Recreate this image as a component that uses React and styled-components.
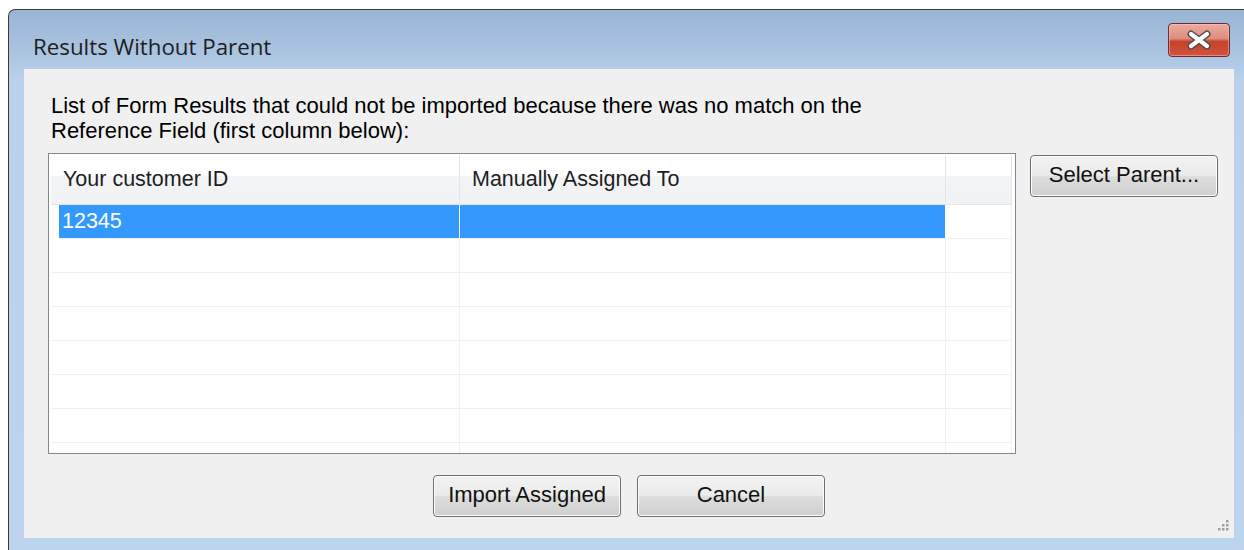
import React from 'react';
import styled, { createGlobalStyle } from 'styled-components';

const GlobalStyle = createGlobalStyle`
  html, body {
    margin: 0;
    padding: 0;
    background: #ffffff;
    overflow: hidden;
  }
`;

const Window = styled.div`
  margin: 9px 0 0 8px;
  width: 1250px;
  height: 560px;
  box-sizing: border-box;
  border: 1px solid #3a3a3a;
  border-right: none;
  border-bottom: none;
  border-radius: 7px 0 0 0;
  background: linear-gradient(to bottom, #9ab5d4 0px, #a9c3e0 40px, #b9d1eb 70px, #bcd4ed 100%);
  padding: 0 0 0 15px;
  display: flex;
  flex-direction: column;
`;

const TitleBar = styled.div`
  height: 59px;
  display: flex;
  align-items: center;
  width: 1210px;
`;

const Title = styled.div`
  font-family: "Open Sans", "Noto Sans", sans-serif;
  font-size: 22.3px;
  color: #1e1e1e;
  padding-left: 9px;
  padding-top: 13px;
`;

const CloseButton = styled.div`
  margin-left: auto;
  margin-right: 4px;
  margin-top: 1px;
  width: 62px;
  height: 34px;
  box-sizing: border-box;
  border: 1px solid #6a2c3a;
  border-radius: 4px;
  background: linear-gradient(to bottom, #eaab9e 0%, #de8e7f 45%, #c4422a 55%, #d0553c 100%);
  box-shadow: inset 0 0 0 1px rgba(255, 210, 200, 0.45);
  display: flex;
  align-items: center;
  justify-content: center;
`;

const Client = styled.div`
  position: relative;
  width: 1210px;
  height: 469px;
  box-sizing: border-box;
  background: #f0f0f0;
  padding: 24px 0 0 24px;
  font-family: "Liberation Sans", Arial, sans-serif;
  font-size: 21.5px;
  color: #000;
`;

const Prompt = styled.div`
  font-size: 22px;
  line-height: 25px;
  margin-left: 3px;
  height: 60px;
`;

const MainRow = styled.div`
  display: flex;
  align-items: flex-start;
`;

const ListView = styled.div`
  width: 968px;
  height: 301px;
  box-sizing: border-box;
  border: 1px solid #828790;
  background: #ffffff;
  padding: 1px 2px 0 2px;
  overflow: hidden;
`;

const Grid = styled.div`
  display: grid;
  grid-template-columns: 409px 486px 66px;
`;

const HeaderCell = styled.div`
  height: 50px;
  box-sizing: border-box;
  border-right: 1px solid #e3e5e8;
  border-bottom: 1px solid #e5e5e5;
  background: linear-gradient(to bottom, #ffffff 0%, #ffffff 42%, #f3f4f6 43%, #f1f2f4 100%);
  display: flex;
  align-items: center;
  padding: 0 0 0 12px;
  color: #1e1e1e;
`;

const Cell = styled.div`
  height: 34px;
  box-sizing: border-box;
  border-right: 1px solid ${p => (p.$selected ? '#ffffff' : '#f0f0f0')};
  border-bottom: 1px solid #f0f0f0;
  display: flex;
  align-items: center;
  padding-left: ${p => (p.$first ? '11px' : '6px')};
  color: ${p => (p.$selected ? '#ffffff' : '#000')};
  background: ${p => (p.$selected ? '#3399ff' : '#ffffff')};
  ${p => p.$selected && p.$first && `
    margin-left: 8px;
    padding-left: 3px;
  `}
`;

const SideButtons = styled.div`
  margin-left: 14px;
  margin-top: 2px;
`;

const Button = styled.button`
  width: 188px;
  height: 42px;
  box-sizing: border-box;
  border: 1px solid #707070;
  border-radius: 4px;
  background: linear-gradient(to bottom, #f2f2f2 0%, #ebebeb 48%, #dddddd 52%, #cfcfcf 100%);
  box-shadow: inset 0 0 0 1px #fcfcfc;
  font-family: "Liberation Sans", Arial, sans-serif;
  font-size: 22px;
  color: #111;
  padding: 0 0 3px 0;
  display: flex;
  align-items: center;
  justify-content: center;
`;

const Footer = styled.div`
  display: flex;
  justify-content: center;
  gap: 16px;
  margin-top: 21px;
  padding-right: 24px;
`;

const Grip = styled.svg`
  position: absolute;
  right: 4px;
  bottom: 4px;
`;

const BottomEdge = styled.div`
  height: 11px;
  width: 1210px;
`;

const rows = [
  { id: '12345', assigned: '' },
  null, null, null, null, null, null, null,
];

export default function App() {
  return (
    <>
      <GlobalStyle />
      <Window>
        <TitleBar>
          <Title>Results Without Parent</Title>
          <CloseButton>
            <svg width="28" height="20" viewBox="0 0 28 20">
              <path
                d="M6 4 L22 16 M22 4 L6 16"
                stroke="#4a4a4a"
                strokeWidth="7"
                strokeLinecap="round"
              />
              <path
                d="M6 4 L22 16 M22 4 L6 16"
                stroke="#ffffff"
                strokeWidth="4.2"
                strokeLinecap="round"
              />
            </svg>
          </CloseButton>
        </TitleBar>
        <Client>
          <Prompt>
            List of Form Results that could not be imported because there was no match on the
            <br />
            Reference Field (first column below):
          </Prompt>
          <MainRow>
            <ListView>
              <Grid>
                <HeaderCell>Your customer ID</HeaderCell>
                <HeaderCell>Manually Assigned To</HeaderCell>
                <HeaderCell />
                {rows.map((row, i) => (
                  <React.Fragment key={i}>
                    <Cell $first $selected={!!row}>{row ? row.id : ''}</Cell>
                    <Cell $selected={!!row}>{row ? row.assigned : ''}</Cell>
                    <Cell />
                  </React.Fragment>
                ))}
              </Grid>
            </ListView>
            <SideButtons>
              <Button>Select Parent...</Button>
            </SideButtons>
          </MainRow>
          <Footer>
            <Button>Import Assigned</Button>
            <Button>Cancel</Button>
          </Footer>
          <Grip width="16" height="16" viewBox="0 0 16 16">
            {[[12, 2], [8, 6], [12, 6], [4, 10], [8, 10], [12, 10]].map(([x, y]) => (
              <rect key={`${x}-${y}`} x={x} y={y} width="2.5" height="2.5" fill="#a0a0a0" />
            ))}
          </Grip>
        </Client>
        <BottomEdge />
      </Window>
    </>
  );
}
